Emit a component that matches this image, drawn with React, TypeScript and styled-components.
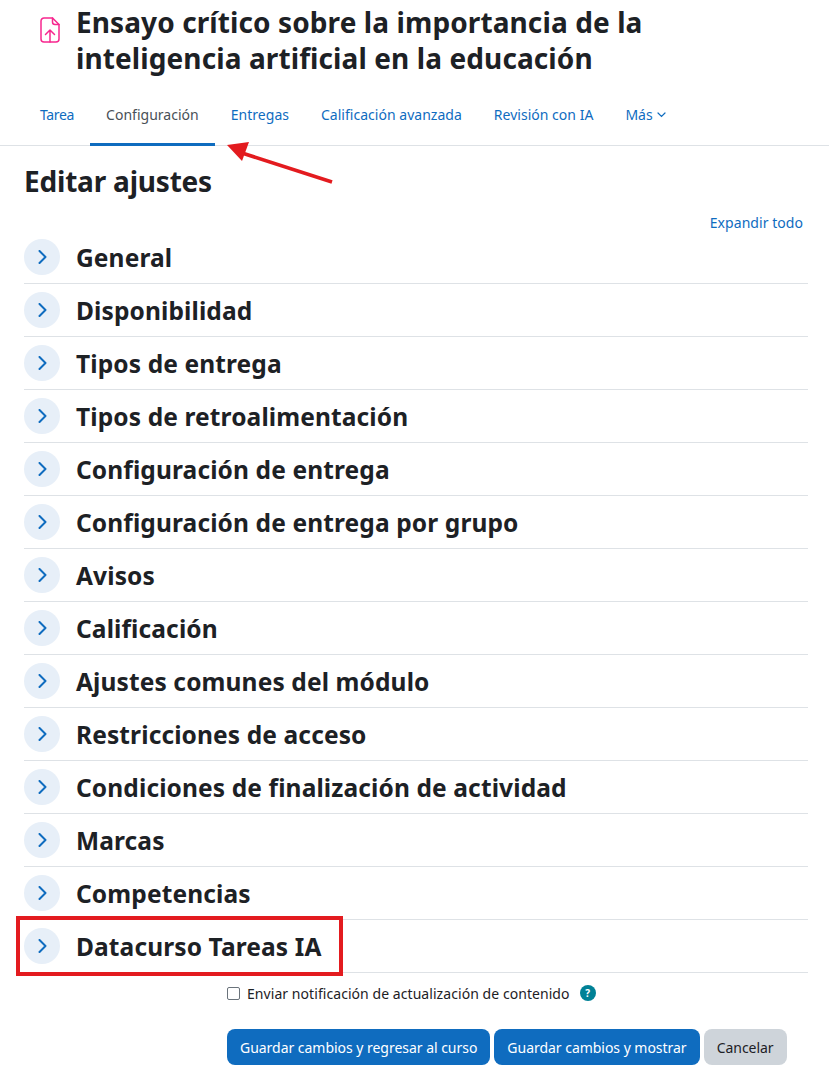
import React from "react";
import styled, { createGlobalStyle } from "styled-components";

const sections = [
  "General",
  "Disponibilidad",
  "Tipos de entrega",
  "Tipos de retroalimentación",
  "Configuración de entrega",
  "Configuración de entrega por grupo",
  "Avisos",
  "Calificación",
  "Ajustes comunes del módulo",
  "Restricciones de acceso",
  "Condiciones de finalización de actividad",
  "Marcas",
  "Competencias",
  "Datacurso Tareas IA",
];

const tabs = [
  "Tarea",
  "Configuración",
  "Entregas",
  "Calificación avanzada",
  "Revisión con IA",
];

const GlobalStyle = createGlobalStyle`
  html, body {
    margin: 0;
    padding: 0;
    background: #fff;
    overflow: hidden;
  }
  body {
    font-family: "Noto Sans", "Open Sans", sans-serif;
    color: #1d2125;
  }
`;

const Page = styled.div`
  position: relative;
  width: 829px;
  height: 1087px;
  overflow: hidden;
`;

const Header = styled.header`
  display: flex;
  align-items: flex-start;
  gap: 14px;
  padding: 4px 24px 0 38px;
`;

const ActivityIcon = styled.div`
  width: 24px;
  height: 26px;
  margin-top: 13px;
  flex: none;
`;

const Title = styled.h1`
  margin: 0;
  font-size: 28px;
  line-height: 36px;
  font-weight: 700;
  letter-spacing: 0.1px;
`;

const TabBar = styled.nav`
  display: flex;
  height: 68px;
  margin-top: 1px;
  padding-left: 24px;
  border-bottom: 1px solid #dee2e6;
`;

const Tab = styled.a<{ $active?: boolean }>`
  display: flex;
  align-items: center;
  gap: 4px;
  height: 69px;
  padding: 8px 16px 0;
  box-sizing: border-box;
  font-size: 14px;
  letter-spacing: 0.02px;
  color: ${(p) => (p.$active ? "#495057" : "#0f6cbf")};
  border-bottom: 3px solid ${(p) => (p.$active ? "#0f6cbf" : "transparent")};

  &:first-child {
    letter-spacing: -0.35px;
  }
`;

const Caret = styled.svg`
  margin-top: 2px;
`;

const Content = styled.main`
  padding: 0 21px 0 24px;
`;

const Heading = styled.h2`
  margin: 17px 0 0;
  font-size: 28px;
  line-height: 36px;
  font-weight: 700;
  letter-spacing: -0.2px;
`;

const ExpandRow = styled.div`
  display: flex;
  justify-content: flex-end;
  padding: 13px 5px 0 0;
  height: 14px;
  margin-bottom: 5px;
`;

const ExpandLink = styled.a`
  font-size: 14px;
  line-height: 22px;
  letter-spacing: 0.05px;
  color: #0f6cbf;
`;

const Section = styled.div`
  position: relative;
  display: flex;
  align-items: center;
  gap: 16px;
  height: 52px;
  border-bottom: 1px solid #dee2e6;
`;

const Toggle = styled.span`
  display: flex;
  align-items: center;
  justify-content: center;
  width: 36px;
  height: 36px;
  border-radius: 50%;
  background: #e7eff8;
  flex: none;
`;

const SectionTitle = styled.h3`
  margin: 0;
  padding-top: 2px;
  font-size: 24.5px;
  line-height: 32px;
  font-weight: 700;
  letter-spacing: 0.12px;
`;

const Highlight = styled.div`
  position: absolute;
  left: -8px;
  top: -4px;
  width: 319px;
  height: 52px;
  border: 4px solid #e31b1f;
  pointer-events: none;
`;

const NotifyRow = styled.label`
  display: flex;
  align-items: center;
  padding-left: 203px;
  margin-top: 9px;
  height: 22px;
  font-size: 14px;
  letter-spacing: 0.06px;
`;

const Check = styled.span`
  width: 13px;
  height: 13px;
  margin-right: 7px;
  border: 1px solid #6a737b;
  border-radius: 2px;
  box-sizing: border-box;
  flex: none;
`;

const HelpBadge = styled.span`
  display: flex;
  align-items: center;
  justify-content: center;
  width: 16px;
  height: 16px;
  margin-left: 10px;
  border-radius: 50%;
  background: #008196;
  color: #fff;
  font-size: 10px;
  font-weight: 700;
  line-height: 16px;
`;

const Actions = styled.div`
  display: flex;
  gap: 4px;
  margin-top: 25px;
  padding-left: 203px;
`;

const Button = styled.button<{ $secondary?: boolean }>`
  height: 36px;
  padding: 0 13px;
  border: none;
  border-radius: 8px;
  font-family: inherit;
  font-size: 14px;
  letter-spacing: -0.03px;
  background: ${(p) => (p.$secondary ? "#ced4da" : "#0f6cbf")};
  color: ${(p) => (p.$secondary ? "#1d2125" : "#fff")};
`;

const ArrowMark = styled.svg`
  position: absolute;
  left: 220px;
  top: 135px;
  width: 120px;
  height: 55px;
  pointer-events: none;
`;

const Chevron = () => (
  <svg width="14" height="14" viewBox="0 0 14 14" fill="none">
    <path
      d="M4.5 1 10.5 7l-6 6"
      stroke="#0f6cbf"
      strokeWidth="2"
      strokeLinecap="round"
      strokeLinejoin="round"
    />
  </svg>
);

const App: React.FC = () => {
  return (
    <Page>
      <GlobalStyle />
      <Header>
        <ActivityIcon>
          <svg width="24" height="26" viewBox="0 0 24 26" fill="none">
            <path
              d="M6 1h8.5L21 7.5V22a3 3 0 0 1-3 3H6a3 3 0 0 1-3-3V4a3 3 0 0 1 3-3Z"
              stroke="#f7278f"
              strokeWidth="1.5"
              strokeLinejoin="round"
            />
            <path
              d="M14.5 1v4a2.5 2.5 0 0 0 2.5 2.5h4M12 25V13M7.5 17.5 12 13l4.5 4.5"
              stroke="#f7278f"
              strokeWidth="1.5"
              strokeLinecap="round"
              strokeLinejoin="round"
            />
          </svg>
        </ActivityIcon>
        <Title>
          Ensayo crítico sobre la importancia de la
          <br />
          inteligencia artificial en la educación
        </Title>
      </Header>
      <TabBar>
        {tabs.map((t) => (
          <Tab key={t} $active={t === "Configuración"}>
            {t}
          </Tab>
        ))}
        <Tab>
          Más
          <Caret width="9" height="6" viewBox="0 0 9 6" fill="none">
            <path
              d="M1 1l3.5 3.5L8 1"
              stroke="#0f6cbf"
              strokeWidth="1.2"
              strokeLinecap="round"
            />
          </Caret>
        </Tab>
      </TabBar>
      <ArrowMark viewBox="0 0 120 55">
        <path d="M112 47 22 18" stroke="#e31b1f" strokeWidth="3.6" />
        <path d="M7 10 29 7 22 26Z" fill="#e31b1f" />
      </ArrowMark>
      <Content>
        <Heading>Editar ajustes</Heading>
        <ExpandRow>
          <ExpandLink>Expandir todo</ExpandLink>
        </ExpandRow>
        {sections.map((s) => (
          <Section key={s}>
            <Toggle>
              <Chevron />
            </Toggle>
            <SectionTitle>{s}</SectionTitle>
            {s === "Datacurso Tareas IA" && <Highlight />}
          </Section>
        ))}
        <NotifyRow>
          <Check />
          Enviar notificación de actualización de contenido
          <HelpBadge>?</HelpBadge>
        </NotifyRow>
        <Actions>
          <Button>Guardar cambios y regresar al curso</Button>
          <Button>Guardar cambios y mostrar</Button>
          <Button $secondary>Cancelar</Button>
        </Actions>
      </Content>
    </Page>
  );
};

export default App;
